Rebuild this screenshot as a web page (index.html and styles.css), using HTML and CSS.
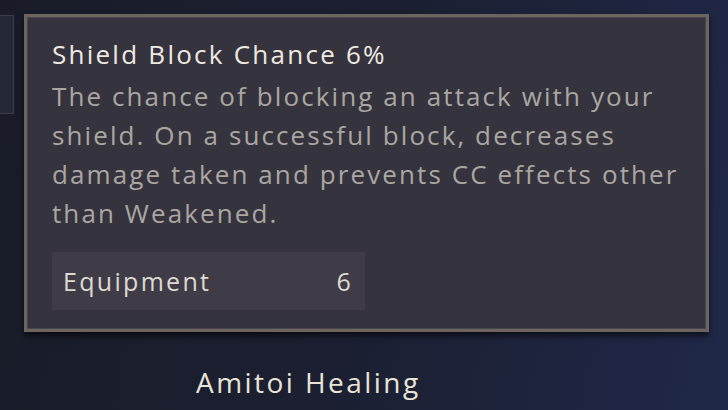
FILE: index.html
```html
<!DOCTYPE html>
<html>
<head>
<meta charset="utf-8">
<link rel="stylesheet" href="styles.css">
</head>
<body>
<div class="scene">
  <div class="side-panel"></div>
  <div class="skill-label">Amitoi Healing</div>
  <div class="tooltip">
    <div class="tooltip-inner">
      <div class="title">Shield Block Chance <span class="value">6%</span></div>
      <p class="desc">The chance of blocking an attack with your<br>shield. On a successful block, decreases<br>damage taken and prevents CC effects other<br>than Weakened.</p>
      <div class="source-row">
        <span class="source-name">Equipment</span>
        <span class="source-value">6</span>
      </div>
    </div>
  </div>
</div>
</body>
</html>
```
FILE: styles.css
```css
html, body {
  margin: 0;
  padding: 0;
}
body {
  width: 728px;
  height: 410px;
  overflow: hidden;
  font-family: "Open Sans", Lato, sans-serif;
  background: linear-gradient(100deg, #191c28 0%, #1b1f31 50%, #202849 100%);
}
.scene {
  position: relative;
  width: 728px;
  height: 410px;
}
.side-panel {
  position: absolute;
  left: -4px;
  top: 15px;
  width: 16px;
  height: 97px;
  border: 1px solid #3a3c4a;
  background: #252837;
}
.skill-label {
  position: absolute;
  left: 196px;
  top: 362px;
  font-size: 28px;
  line-height: 40px;
  color: #e8e4d8;
  letter-spacing: 2.45px;
}
.tooltip {
  position: absolute;
  left: 24px;
  top: 14px;
  width: 685px;
  height: 318px;
  box-sizing: border-box;
  border: 3px solid #6c655e;
  background: #35333d;
  box-shadow: 0 4px 6px rgba(0,0,0,0.6);
}
.tooltip-inner {
  box-sizing: border-box;
  height: 100%;
  border: 1px solid #4a4650;
  padding: 18px 24px 0 24px;
}
.title {
  font-size: 26px;
  line-height: 36px;
  margin-bottom: 5px;
  color: #eeeae2;
  letter-spacing: 2.25px;
  white-space: nowrap;
}
.desc {
  margin: 0;
  font-size: 26px;
  line-height: 39px;
  color: #aaa7a2;
  letter-spacing: 2.1px;
  white-space: nowrap;
}
.source-row {
  margin-top: 19px;
  width: 313px;
  height: 58px;
  box-sizing: border-box;
  background: #3f3c47;
  display: flex;
  align-items: center;
  justify-content: space-between;
  padding: 0 12px 0 11px;
}
.source-name, .source-value {
  font-size: 25px;
  color: #dedad2;
  letter-spacing: 2.3px;
}
```
